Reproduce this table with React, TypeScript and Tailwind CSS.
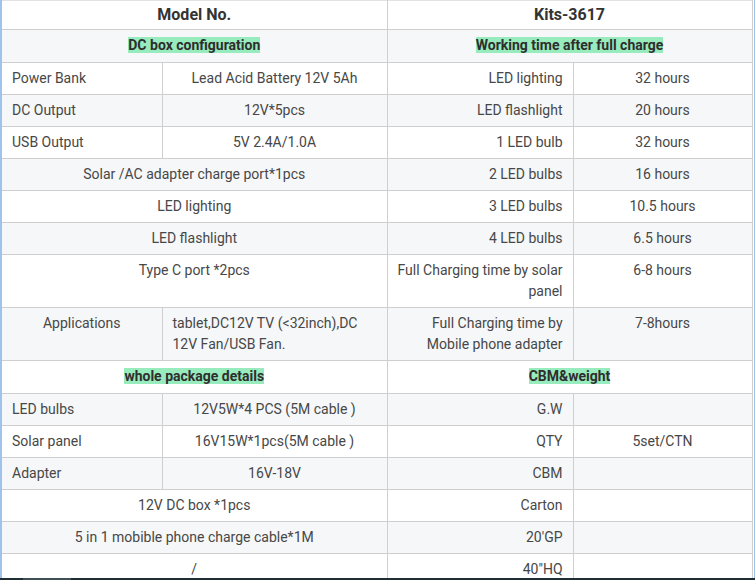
import type { ReactNode } from "react";

type Align = "left" | "center" | "right";

const alignClass: Record<Align, string> = {
  left: "text-left",
  center: "text-center",
  right: "text-right",
};

function Cell({
  children,
  align = "center",
  span = 1,
}: {
  children?: ReactNode;
  align?: Align;
  span?: number;
}) {
  return (
    <td
      colSpan={span}
      className={`border border-[#cfcfcf] px-[10px] py-[5px] align-top leading-[21px] ${alignClass[align]}`}
    >
      {children}
    </td>
  );
}

function Section({ children }: { children: ReactNode }) {
  return (
    <td
      colSpan={2}
      className="border border-[#cfcfcf] px-[10px] pt-[6px] pb-[8px] text-center align-top leading-[18px]"
    >
      <span className="bg-[#98ebbc] font-bold text-[#2e2e2e]">{children}</span>
    </td>
  );
}

export default function App() {
  const rows: ReactNode[] = [
    <>
      <Cell align="left">Power Bank</Cell>
      <Cell>Lead Acid Battery 12V 5Ah</Cell>
      <Cell align="right">LED lighting</Cell>
      <Cell>32 hours</Cell>
    </>,
    <>
      <Cell align="left">DC Output</Cell>
      <Cell>12V*5pcs</Cell>
      <Cell align="right">LED flashlight</Cell>
      <Cell>20 hours</Cell>
    </>,
    <>
      <Cell align="left">USB Output</Cell>
      <Cell>5V 2.4A/1.0A</Cell>
      <Cell align="right">1 LED bulb</Cell>
      <Cell>32 hours</Cell>
    </>,
    <>
      <Cell span={2}>Solar /AC adapter charge port*1pcs</Cell>
      <Cell align="right">2 LED bulbs</Cell>
      <Cell>16 hours</Cell>
    </>,
    <>
      <Cell span={2}>LED lighting</Cell>
      <Cell align="right">3 LED bulbs</Cell>
      <Cell>10.5 hours</Cell>
    </>,
    <>
      <Cell span={2}>LED flashlight</Cell>
      <Cell align="right">4 LED bulbs</Cell>
      <Cell>6.5 hours</Cell>
    </>,
    <>
      <Cell span={2}>Type C port *2pcs</Cell>
      <Cell align="right">
        Full Charging time by solar
        <br />
        panel
      </Cell>
      <Cell>6-8 hours</Cell>
    </>,
    <>
      <Cell>Applications</Cell>
      <Cell align="left">
        tablet,DC12V TV (&lt;32inch),DC
        <br />
        12V Fan/USB Fan.
      </Cell>
      <Cell align="right">
        Full Charging time by
        <br />
        Mobile phone adapter
      </Cell>
      <Cell>7-8hours</Cell>
    </>,
    <>
      <Section>whole package details</Section>
      <Section>CBM&amp;weight</Section>
    </>,
    <>
      <Cell align="left">LED bulbs</Cell>
      <Cell>12V5W*4 PCS (5M cable )</Cell>
      <Cell align="right">G.W</Cell>
      <Cell />
    </>,
    <>
      <Cell align="left">Solar panel</Cell>
      <Cell>16V15W*1pcs(5M cable )</Cell>
      <Cell align="right">QTY</Cell>
      <Cell>5set/CTN</Cell>
    </>,
    <>
      <Cell align="left">Adapter</Cell>
      <Cell>16V-18V</Cell>
      <Cell align="right">CBM</Cell>
      <Cell />
    </>,
    <>
      <Cell span={2}>12V DC box *1pcs</Cell>
      <Cell align="right">Carton</Cell>
      <Cell />
    </>,
    <>
      <Cell span={2}>5 in 1 mobible phone charge cable*1M</Cell>
      <Cell align="right">20'GP</Cell>
      <Cell />
    </>,
    <>
      <Cell span={2}>/</Cell>
      <Cell align="right">40"HQ</Cell>
      <Cell />
    </>,
  ];

  return (
    <div className="h-[580px] w-[755px] overflow-hidden bg-white font-['Roboto','Liberation_Sans',sans-serif] text-[14px] text-[#474747]">
      <div className="flex h-[578px] overflow-hidden">
        <div className="w-[2px] shrink-0 bg-[#9fc3ec]" />
        <table className="w-[750px] shrink-0 table-fixed border-collapse self-start [&_td:first-child]:border-l-0">
          <colgroup>
            <col className="w-[160px]" />
            <col className="w-[225px]" />
            <col className="w-[186px]" />
            <col className="w-[179px]" />
          </colgroup>
          <tbody>
            <tr className="bg-white">
              <td
                colSpan={2}
                className="h-[29px] border border-[#cfcfcf] border-t-[#e2e2e6] p-0 text-center align-middle text-[16px] font-bold leading-[26px] text-[#333]"
              >
                Model No.
              </td>
              <td
                colSpan={2}
                className="h-[29px] border border-[#cfcfcf] border-t-[#e2e2e6] p-0 text-center align-middle text-[16px] font-bold leading-[26px] text-[#333]"
              >
                Kits-3617
              </td>
            </tr>
            <tr className="bg-[#f6f7f9]">
              <Section>DC box configuration</Section>
              <Section>Working time after full charge</Section>
            </tr>
            {rows.map((r, i) => (
              <tr key={i} className={i % 2 === 0 ? "bg-white" : "bg-[#f6f7f9]"}>
                {r}
              </tr>
            ))}
          </tbody>
        </table>
        <div className="w-[1px] shrink-0 bg-white" />
        <div className="w-[2px] shrink-0 bg-[#9fc3ec]" />
      </div>
      <div className="flex h-[2px] bg-[#1f2e33]">
        <div className="w-[23px]" />
        <div className="w-[48px] bg-[#3e4f55]" />
      </div>
    </div>
  );
}
